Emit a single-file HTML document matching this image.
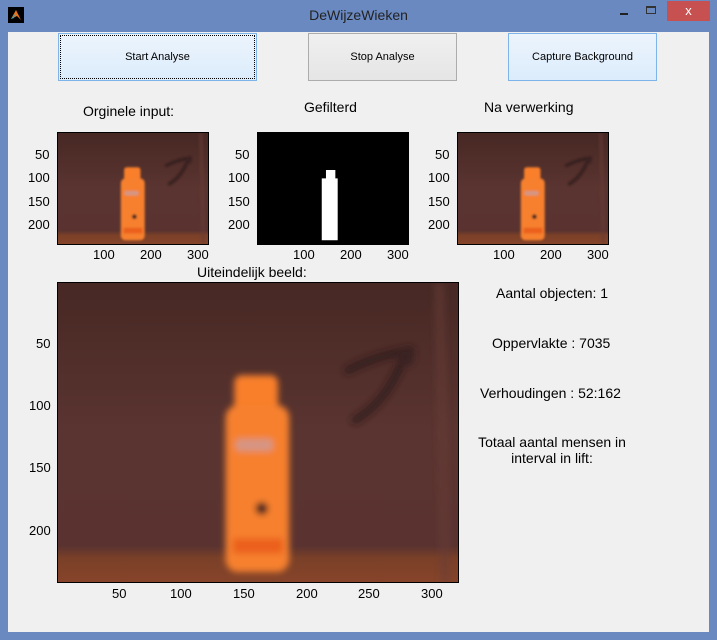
<!DOCTYPE html>
<html><head><style>
*{margin:0;padding:0;box-sizing:border-box}
body{width:717px;height:640px;background:#6b89c1;position:relative;overflow:hidden;font-family:"Liberation Sans",sans-serif}
.t{position:absolute;white-space:nowrap;color:#000}
#client{position:absolute;left:8px;top:32px;width:701px;height:600px;background:#f0f0f0}
.btn{position:absolute;font-size:11px;display:flex;align-items:center;justify-content:center}
.ax{position:absolute;border:1px solid #000}
.ax svg{display:block;width:100%;height:100%}
.tick{font-size:13px;position:absolute}
</style></head><body>
<div class="t" style="left:0;top:7px;width:717px;text-align:center;font-size:14px;color:#222">DeWijzeWieken</div>
<div style="position:absolute;left:8px;top:7px;width:16px;height:16px;background:#000"><svg width="16" height="16"><path d="M3 12 L8 3 L13 13 L9 9 Z" fill="#e8741c"/><path d="M3 12 L7 7 L6 11Z" fill="#2aa3c8"/></svg></div>
<div style="position:absolute;left:620px;top:13px;width:8px;height:2px;background:#222"></div>
<div style="position:absolute;left:646px;top:6px;width:10px;height:8px;border:1px solid #333;border-top-width:2px"></div>
<div style="position:absolute;left:667px;top:1px;width:43px;height:20px;background:#c75050;color:#fff;font-size:13px;text-align:center;line-height:20px">x</div>
<div id="client"></div>
<div class="btn" style="left:58px;top:33px;width:199px;height:48px;border:1px solid #7eb4ea;background:linear-gradient(#ecf4fc,#dcecfc);outline:1px dotted #000;outline-offset:-3px">Start Analyse</div>
<div class="btn" style="left:308px;top:33px;width:149px;height:48px;border:1px solid #acacac;background:linear-gradient(#f0f0f0,#e5e5e5)">Stop Analyse</div>
<div class="btn" style="left:508px;top:33px;width:149px;height:48px;border:1px solid #7eb4ea;background:linear-gradient(#ecf4fc,#dcecfc)">Capture Background</div>
<div class="t" style="left:83px;top:103px;font-size:14px">Orginele input:</div>
<div class="t" style="left:304px;top:99px;font-size:14px">Gefilterd</div>
<div class="t" style="left:484px;top:99px;font-size:14px">Na verwerking</div>
<div class="t" style="left:197px;top:264px;font-size:14px">Uiteindelijk beeld:</div>

<svg width="0" height="0" style="position:absolute"><defs>
<filter id="bl" x="-10%" y="-10%" width="120%" height="120%"><feGaussianBlur stdDeviation="2.5"/></filter>
<linearGradient id="bg" x1="0" y1="0" x2="0" y2="1"><stop offset="0" stop-color="#472824"/><stop offset="0.5" stop-color="#5a3430"/><stop offset="0.88" stop-color="#5a3330"/><stop offset="0.92" stop-color="#7a4028"/><stop offset="1" stop-color="#86442a"/></linearGradient>
<g id="img"><rect width="320" height="240" fill="url(#bg)"/>
<g filter="url(#bl)">
<path d="M305 0 L310 240" stroke="#6a3c36" stroke-width="8" opacity=".5"/>
<path d="M232 70 Q255 58 282 54 M274 66 Q262 95 238 110" stroke="#2e1a1c" stroke-width="7" fill="none" opacity=".75" stroke-linecap="round"/>
<circle cx="278" cy="60" r="7" fill="#3a2220"/>
<rect x="141" y="74" width="35" height="34" rx="6" fill="#f97f2c"/>
<rect x="134" y="98" width="51" height="134" rx="10" fill="#f6802e"/>
<rect x="142" y="125" width="30" height="10" rx="3" fill="#c9a0a8" opacity=".7"/>
<rect x="140" y="205" width="40" height="12" fill="#e8581c" opacity=".8"/>
<circle cx="163" cy="181" r="5" fill="#3a2420"/>
</g></g></defs></svg>

<div class="ax" style="left:57px;top:132px;width:152px;height:113px"><svg viewBox="0 0 320 240" preserveAspectRatio="none"><use href="#img"/></svg></div>
<div class="ax" style="left:257px;top:132px;width:152px;height:113px;background:#000"><svg viewBox="0 0 320 240" preserveAspectRatio="none"><path d="M145 80 H165 V98 H170 V232 H136 V98 H145Z" fill="#fff"/></svg></div>
<div class="ax" style="left:457px;top:132px;width:152px;height:113px"><svg viewBox="0 0 320 240" preserveAspectRatio="none"><use href="#img"/></svg></div>

<div class="tick" style="left:35px;top:147px">50</div><div class="tick" style="left:28px;top:170px">100</div><div class="tick" style="left:28px;top:194px">150</div><div class="tick" style="left:28px;top:217px">200</div>
<div class="tick" style="left:235px;top:147px">50</div><div class="tick" style="left:228px;top:170px">100</div><div class="tick" style="left:228px;top:194px">150</div><div class="tick" style="left:228px;top:217px">200</div>
<div class="tick" style="left:435px;top:147px">50</div><div class="tick" style="left:428px;top:170px">100</div><div class="tick" style="left:428px;top:194px">150</div><div class="tick" style="left:428px;top:217px">200</div>
<div class="tick" style="left:93px;top:247px">100</div><div class="tick" style="left:140px;top:247px">200</div><div class="tick" style="left:187px;top:247px">300</div>
<div class="tick" style="left:293px;top:247px">100</div><div class="tick" style="left:340px;top:247px">200</div><div class="tick" style="left:387px;top:247px">300</div>
<div class="tick" style="left:493px;top:247px">100</div><div class="tick" style="left:540px;top:247px">200</div><div class="tick" style="left:587px;top:247px">300</div>

<div class="ax" style="left:57px;top:282px;width:402px;height:301px"><svg viewBox="0 0 320 240" preserveAspectRatio="none"><use href="#img"/></svg></div>
<div class="tick" style="left:36px;top:336px">50</div><div class="tick" style="left:29px;top:398px">100</div><div class="tick" style="left:29px;top:460px">150</div><div class="tick" style="left:29px;top:523px">200</div>
<div class="tick" style="left:112px;top:586px">50</div><div class="tick" style="left:170px;top:586px">100</div><div class="tick" style="left:233px;top:586px">150</div><div class="tick" style="left:296px;top:586px">200</div><div class="tick" style="left:358px;top:586px">250</div><div class="tick" style="left:421px;top:586px">300</div>

<div class="t" style="left:496px;top:285px;font-size:14px">Aantal objecten: 1</div>
<div class="t" style="left:492px;top:335px;font-size:14px">Oppervlakte : 7035</div>
<div class="t" style="left:480px;top:385px;font-size:14px">Verhoudingen : 52:162</div>
<div class="t" style="left:462px;top:434px;width:180px;text-align:center;font-size:14px;line-height:16px;white-space:normal">Totaal aantal mensen in interval in lift:</div>
</body></html>
